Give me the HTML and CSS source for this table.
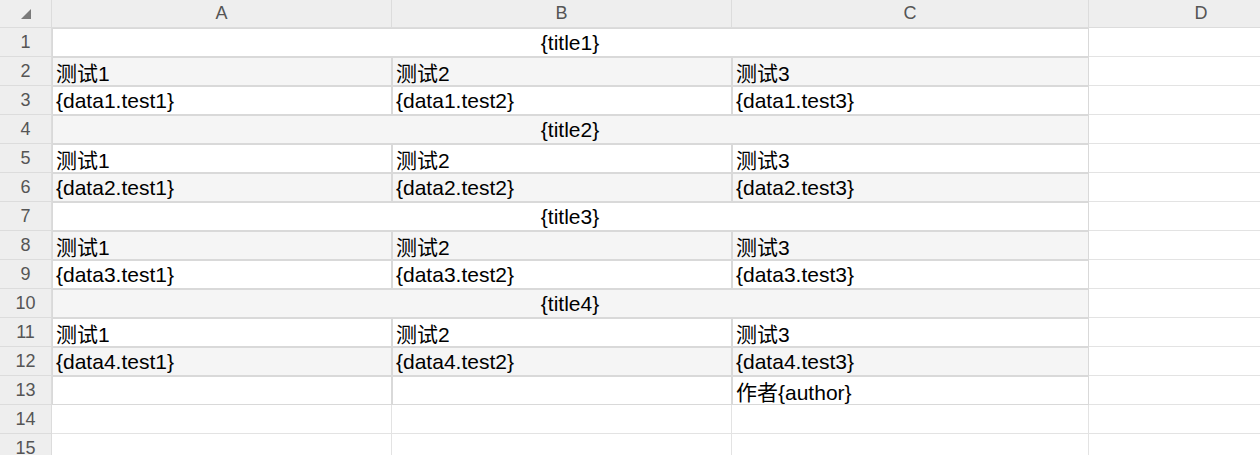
FILE: index.html
```html
<!DOCTYPE html>
<html lang="zh">
<head>
<meta charset="utf-8">
<title>Sheet</title>
<link rel="stylesheet" href="styles.css">
</head>
<body>
<div class="sheet">
  <div class="corner"><svg width="10" height="10" viewBox="0 0 10 10"><polygon points="10,0 10,10 0,10" fill="#7a7a7a"/></svg></div>
  <div class="colhead">A</div>
  <div class="colhead">B</div>
  <div class="colhead">C</div>
  <div class="colhead">D</div>

  <div class="rowhead">1</div>
  <div class="cell rg title">{title1}</div>
  <div class="cell"></div>

  <div class="rowhead">2</div>
  <div class="cell rg alt">测试1</div>
  <div class="cell rg alt">测试2</div>
  <div class="cell rg alt">测试3</div>
  <div class="cell"></div>

  <div class="rowhead">3</div>
  <div class="cell rg">{data1.test1}</div>
  <div class="cell rg">{data1.test2}</div>
  <div class="cell rg">{data1.test3}</div>
  <div class="cell"></div>

  <div class="rowhead">4</div>
  <div class="cell rg alt title">{title2}</div>
  <div class="cell"></div>

  <div class="rowhead">5</div>
  <div class="cell rg">测试1</div>
  <div class="cell rg">测试2</div>
  <div class="cell rg">测试3</div>
  <div class="cell"></div>

  <div class="rowhead">6</div>
  <div class="cell rg alt">{data2.test1}</div>
  <div class="cell rg alt">{data2.test2}</div>
  <div class="cell rg alt">{data2.test3}</div>
  <div class="cell"></div>

  <div class="rowhead">7</div>
  <div class="cell rg title">{title3}</div>
  <div class="cell"></div>

  <div class="rowhead">8</div>
  <div class="cell rg alt">测试1</div>
  <div class="cell rg alt">测试2</div>
  <div class="cell rg alt">测试3</div>
  <div class="cell"></div>

  <div class="rowhead">9</div>
  <div class="cell rg">{data3.test1}</div>
  <div class="cell rg">{data3.test2}</div>
  <div class="cell rg">{data3.test3}</div>
  <div class="cell"></div>

  <div class="rowhead">10</div>
  <div class="cell rg alt title">{title4}</div>
  <div class="cell"></div>

  <div class="rowhead">11</div>
  <div class="cell rg">测试1</div>
  <div class="cell rg">测试2</div>
  <div class="cell rg">测试3</div>
  <div class="cell"></div>

  <div class="rowhead">12</div>
  <div class="cell rg alt">{data4.test1}</div>
  <div class="cell rg alt">{data4.test2}</div>
  <div class="cell rg alt">{data4.test3}</div>
  <div class="cell"></div>

  <div class="rowhead">13</div>
  <div class="cell rg"></div>
  <div class="cell rg"></div>
  <div class="cell rg">作者{author}</div>
  <div class="cell"></div>

  <div class="rowhead">14</div>
  <div class="cell"></div>
  <div class="cell"></div>
  <div class="cell"></div>
  <div class="cell"></div>

  <div class="rowhead">15</div>
  <div class="cell"></div>
  <div class="cell"></div>
  <div class="cell"></div>
  <div class="cell"></div>
</div>
</body>
</html>
```

FILE: styles.css
```css
html, body {
  margin: 0;
  padding: 0;
  background: #ffffff;
  overflow: hidden;
}

.sheet {
  display: grid;
  grid-template-columns: 52px 340px 340px 357px 225px;
  grid-template-rows: 28px;
  grid-auto-rows: 29px;
  width: 1260px;
  height: 455px;
  overflow: hidden;
  font-family: "Liberation Sans", "Noto Sans CJK SC", sans-serif;
}

.sheet > div {
  box-sizing: border-box;
  border-right: 1px solid #e3e3e3;
  border-bottom: 1px solid #e3e3e3;
}

.corner {
  background: #eeeeee;
  display: flex;
  align-items: flex-start;
  justify-content: flex-end;
  padding: 9px 20px 0 0;
  border-color: #dcdcdc !important;
}

.corner svg {
  display: block;
}

.colhead {
  background: #eeeeee;
  color: #555555;
  font-size: 18px;
  display: flex;
  align-items: center;
  justify-content: center;
  border-color: #dcdcdc !important;
}

.rowhead {
  background: #eeeeee;
  color: #555555;
  font-size: 18px;
  display: flex;
  align-items: center;
  justify-content: center;
  padding-top: 1px;
  border-color: #dcdcdc !important;
}

.cell {
  background: #ffffff;
  color: #000000;
  font-size: 21px;
  display: flex;
  align-items: center;
  padding: 2px 0 0 4px;
  white-space: nowrap;
  overflow: hidden;
}

.cell.rg {
  border-right-color: #d9d9d9;
  border-bottom-color: #d9d9d9;
  box-shadow: inset 0 1px 0 #d9d9d9, inset 1px 0 0 #d9d9d9;
}

.cell.alt {
  background: #f5f5f5;
}

.cell.title {
  grid-column: 2 / 5;
  justify-content: center;
  padding-left: 0;
}
```
